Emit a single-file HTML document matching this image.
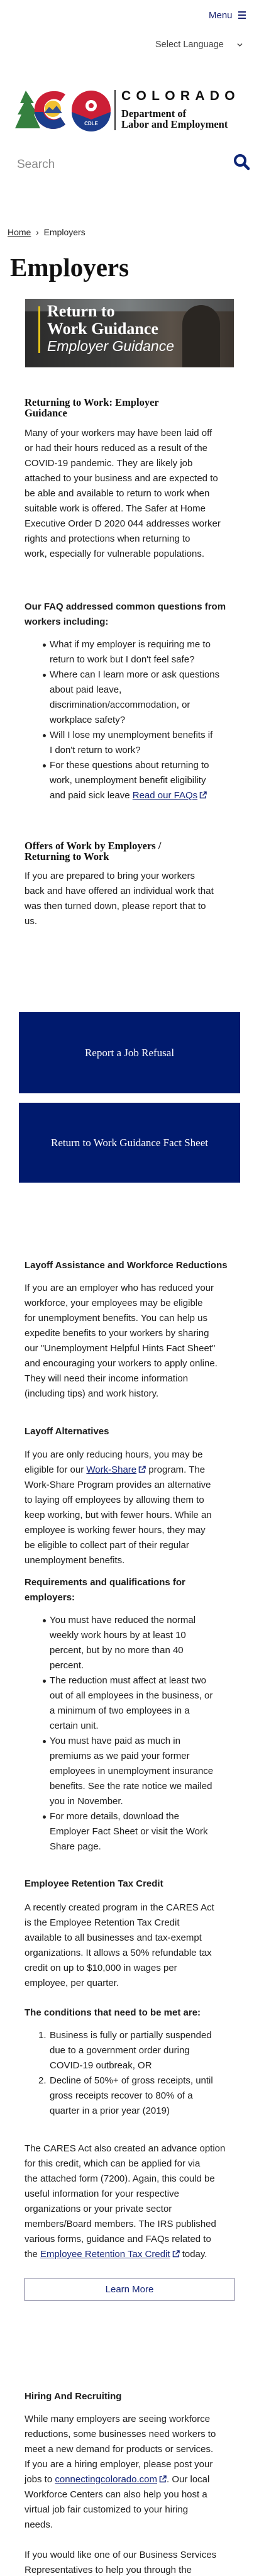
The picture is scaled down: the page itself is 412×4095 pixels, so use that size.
<!DOCTYPE html>
<html><head><meta charset="utf-8">
<style>
*{margin:0;padding:0;box-sizing:border-box}
html,body{width:412px;height:4095px;background:#fff;overflow:hidden}
body{position:relative;font-family:"Liberation Sans",sans-serif;color:#1e1e1e;font-size:15px}
.a{position:absolute;white-space:nowrap}
.p{left:39px;line-height:24px;font-size:15px}
.b{font-weight:bold}
.s{font-family:"Liberation Serif",serif;font-weight:bold;font-size:16.5px;line-height:17px;left:39px;color:#111}
.li{position:relative;padding-left:40px}
.li:before{content:"";position:absolute;left:29px;top:10px;width:5px;height:5px;border-radius:50%;background:#222}
a{color:#1a2a7a;text-decoration:underline}
.btn{position:absolute;left:30px;width:352px;background:#001a6e;color:#fff;font-family:"Liberation Serif",serif;font-size:17px;display:flex;align-items:center;justify-content:center}
.ext{display:inline-block;width:12px;height:12px;vertical-align:-1px;margin-left:3px}
</style></head><body>

<div class="a" style="left:332px;top:16px;font-size:15px;color:#1a2370">Menu</div>
<div class="a" style="left:379px;top:18px;width:12px;height:2px;background:#1a2370"></div>
<div class="a" style="left:379px;top:23px;width:12px;height:2px;background:#1a2370"></div>
<div class="a" style="left:379px;top:28px;width:12px;height:2px;background:#1a2370"></div>
<div class="a" style="left:247px;top:63px;font-size:14.5px;color:#444">Select Language</div>
<svg class="a" style="left:377px;top:68px" width="9" height="7" viewBox="0 0 9 7"><path d="M1 1.5L4.5 5L8 1.5" stroke="#444" stroke-width="1.5" fill="none"/></svg>

<svg class="a" style="left:24px;top:142px" width="152" height="67" viewBox="0 0 152 67">
 <polygon points="17,2 30,22 25,22 36,40 30,40 40,62 0,62 10,40 4,40 14,22 8,22" fill="#35803f"/>
 <path d="M60 3 A30 30 0 1 0 80 56 L72 44 A16 16 0 1 1 72 19 L80 8 A30 30 0 0 0 60 3Z" fill="#cc1f36"/>
 <path d="M31 36 A30 30 0 0 0 80 56 L72 44 A16 16 0 0 1 45 36Z" fill="#1c3d8c"/>
 <circle cx="60" cy="31" r="13" fill="#f2c132"/>
 <path d="M46 38 L54 28 L60 33 L66 26 L75 38Z" fill="#33508f"/>
 <circle cx="121" cy="33" r="31" fill="#cc1f36"/>
 <path d="M90 36 L121 48 L152 36 A31 31 0 0 1 90 36Z" fill="#1c3d8c"/>
 <circle cx="121" cy="26" r="9" fill="#fff"/>
 <circle cx="121" cy="26" r="4" fill="#cc1f36"/>
 <text x="121" y="57" text-anchor="middle" font-family="Liberation Sans" font-weight="bold" font-size="8" fill="#fff">CDLE</text>
</svg>
<div class="a" style="left:182px;top:143px;width:2px;height:64px;background:#333"></div>
<div class="a" style="left:193px;top:141px;font-size:21px;font-weight:bold;letter-spacing:8.3px;color:#111">COLORADO</div>
<div class="a" style="left:193px;top:172px;font-family:'Liberation Serif',serif;font-weight:bold;font-size:16.5px;line-height:17px;color:#111">Department of<br>Labor and Employment</div>

<div class="a" style="left:27px;top:251px;font-size:19px;color:#8a8a8a">Search</div>
<svg class="a" style="left:371px;top:244px" width="27" height="27" viewBox="0 0 27 27"><circle cx="11" cy="11" r="8" stroke="#0d2575" stroke-width="4" fill="none"/><path d="M17 17L24 24" stroke="#0d2575" stroke-width="4.5" stroke-linecap="round"/></svg>

<div class="a" style="left:12px;top:361px;font-size:14px;color:#222"><span style="text-decoration:underline">Home</span> &nbsp;›&nbsp; Employers</div>
<div class="a" style="left:16px;top:402px;font-family:'Liberation Serif',serif;font-weight:bold;font-size:41px;line-height:46px;color:#111">Employers</div>

<div class="a" style="left:40px;top:475px;width:332px;height:109px;background:linear-gradient(90deg,#2b2b2b 0%,#3d3d3b 45%,#5a5148 70%,#3a332d 100%);overflow:hidden">
 <div style="position:absolute;left:0;top:0;width:332px;height:20px;background:linear-gradient(90deg,#555,#7a7f80,#4b4b4b)"></div>
 <div style="position:absolute;left:250px;top:10px;width:60px;height:99px;background:#2a2622;border-radius:30px 30px 0 0"></div>
 <div style="position:absolute;left:21px;top:12px;width:3px;height:74px;background:#e6c41a"></div>
 <div style="position:absolute;left:35px;top:6px;font-family:'Liberation Serif',serif;font-weight:bold;font-size:26px;line-height:28px;color:#fff">Return to<br>Work Guidance</div>
 <div style="position:absolute;left:35px;top:62px;font-style:italic;font-size:23px;color:#fff">Employer Guidance</div>
</div>

<div class="a s" style="top:631px">Returning to Work: Employer<br>Guidance</div>
<div class="a p" style="top:677px">Many of your workers may have been laid off<br>or had their hours reduced as a result of the<br>COVID-19 pandemic. They are likely job<br>attached to your business and are expected to<br>be able and available to return to work when<br>suitable work is offered. The Safer at Home<br>Executive Order D 2020 044 addresses worker<br>rights and protections when returning to<br>work, especially for vulnerable populations.</div>

<div class="a p b" style="top:953px">Our FAQ addressed common questions from<br>workers including:</div>
<div class="a p" style="top:1013px">
 <div class="li">What if my employer is requiring me to<br>return to work but I don't feel safe?</div>
 <div class="li">Where can I learn more or ask questions<br>about paid leave,<br>discrimination/accommodation, or<br>workplace safety?</div>
 <div class="li">Will I lose my unemployment benefits if<br>I don't return to work?</div>
 <div class="li">For these questions about returning to<br>work, unemployment benefit eligibility<br>and paid sick leave <a>Read our FAQs</a><svg class="ext" viewBox="0 0 12 12"><path d="M5 2H1.5V10.5H10V7M7 1H11V5M11 1L5.5 6.5" stroke="#1a2a7a" stroke-width="1.5" fill="none"/></svg></div>
</div>

<div class="a s" style="top:1336px">Offers of Work by Employers /<br>Returning to Work</div>
<div class="a p" style="top:1381px">If you are prepared to bring your workers<br>back and have offered an individual work that<br>was then turned down, please report that to<br>us.</div>

<div class="btn" style="top:1609px;height:129px">Report a Job Refusal</div>
<div class="btn" style="top:1753px;height:127px">Return to Work Guidance Fact Sheet</div>

<div class="a p b" style="top:2000px">Layoff Assistance and Workforce Reductions</div>
<div class="a p" style="top:2036px">If you are an employer who has reduced your<br>workforce, your employees may be eligible<br>for unemployment benefits. You can help us<br>expedite benefits to your workers by sharing<br>our "Unemployment Helpful Hints Fact Sheet"<br>and encouraging your workers to apply online.<br>They will need their income information<br>(including tips) and work history.</div>

<div class="a p b" style="top:2264px">Layoff Alternatives</div>
<div class="a p" style="top:2301px">If you are only reducing hours, you may be<br>eligible for our <a>Work-Share</a><svg class="ext" viewBox="0 0 12 12"><path d="M5 2H1.5V10.5H10V7M7 1H11V5M11 1L5.5 6.5" stroke="#1a2a7a" stroke-width="1.5" fill="none"/></svg> program. The<br>Work-Share Program provides an alternative<br>to laying off employees by allowing them to<br>keep working, but with fewer hours. While an<br>employee is working fewer hours, they may<br>be eligible to collect part of their regular<br>unemployment benefits.</div>

<div class="a p b" style="top:2504px">Requirements and qualifications for<br>employers:</div>
<div class="a p" style="top:2564px">
 <div class="li">You must have reduced the normal<br>weekly work hours by at least 10<br>percent, but by no more than 40<br>percent.</div>
 <div class="li">The reduction must affect at least two<br>out of all employees in the business, or<br>a minimum of two employees in a<br>certain unit.</div>
 <div class="li">You must have paid as much in<br>premiums as we paid your former<br>employees in unemployment insurance<br>benefits. See the rate notice we mailed<br>you in November.</div>
 <div class="li">For more details, download the<br>Employer Fact Sheet or visit the Work<br>Share page.</div>
</div>

<div class="a p b" style="top:2983px">Employee Retention Tax Credit</div>
<div class="a p" style="top:3021px">A recently created program in the CARES Act<br>is the Employee Retention Tax Credit<br>available to all businesses and tax-exempt<br>organizations. It allows a 50% refundable tax<br>credit on up to $10,000 in wages per<br>employee, per quarter.</div>
<div class="a p b" style="top:3188px">The conditions that need to be met are:</div>
<div class="a p" style="top:3224px">
 <div style="position:relative;padding-left:40px"><span style="position:absolute;left:22px">1.</span>Business is fully or partially suspended<br>due to a government order during<br>COVID-19 outbreak, OR</div>
 <div style="position:relative;padding-left:40px"><span style="position:absolute;left:22px">2.</span>Decline of 50%+ of gross receipts, until<br>gross receipts recover to 80% of a<br>quarter in a prior year (2019)</div>
</div>
<div class="a p" style="top:3404px">The CARES Act also created an advance option<br>for this credit, which can be applied for via<br>the attached form (7200). Again, this could be<br>useful information for your respective<br>organizations or your private sector<br>members/Board members. The IRS published<br>various forms, guidance and FAQs related to<br>the <a>Employee Retention Tax Credit</a><svg class="ext" viewBox="0 0 12 12"><path d="M5 2H1.5V10.5H10V7M7 1H11V5M11 1L5.5 6.5" stroke="#1a2a7a" stroke-width="1.5" fill="none"/></svg> today.</div>

<div class="a" style="left:39px;top:3621px;width:334px;height:37px;border:1.5px solid #6a6a8a;color:#1a2a7a;font-size:15px;display:flex;align-items:center;justify-content:center">Learn More</div>

<div class="a p b" style="top:3798px">Hiring And Recruiting</div>
<div class="a p" style="top:3834px">While many employers are seeing workforce<br>reductions, some businesses need workers to<br>meet a new demand for products or services.<br>If you are a hiring employer, please post your<br>jobs to <a>connectingcolorado.com</a><svg class="ext" viewBox="0 0 12 12"><path d="M5 2H1.5V10.5H10V7M7 1H11V5M11 1L5.5 6.5" stroke="#1a2a7a" stroke-width="1.5" fill="none"/></svg>. Our local<br>Workforce Centers can also help you host a<br>virtual job fair customized to your hiring<br>needs.</div>
<div class="a p" style="top:4050px">If you would like one of our Business Services<br>Representatives to help you through the</div>
</body></html>
